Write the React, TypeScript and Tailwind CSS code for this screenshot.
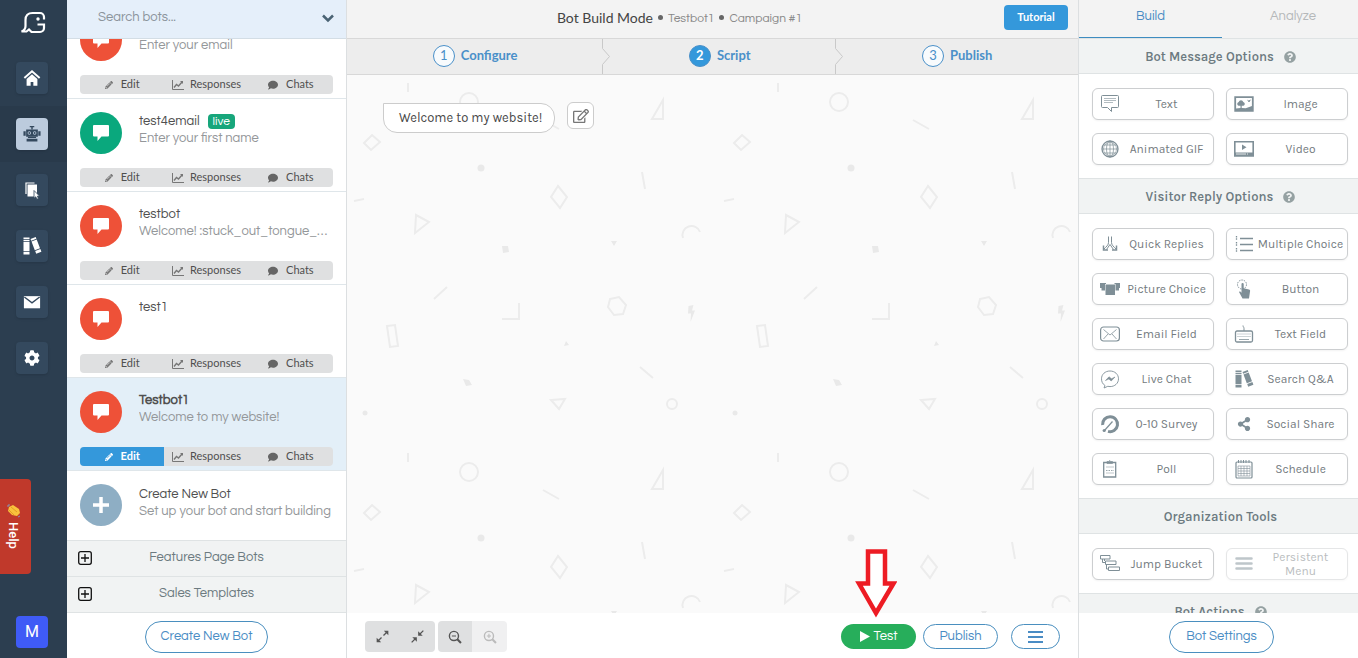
import React, { useLayoutEffect, useRef, useState } from "react";
import { FaComment, FaCog, FaPencilAlt, FaQuestionCircle, FaRegEdit, FaShareAlt } from "react-icons/fa";
import { clsx } from "clsx";

interface Bot {
  name: string;
  message: string;
  live?: boolean;
}

interface Tool {
  label: string;
  icon: React.ReactNode;
  disabled?: boolean;
}

const bots: Bot[] = [
  { name: "test-email", message: "Enter your email" },
  { name: "test4email", message: "Enter your first name", live: true },
  { name: "testbot", message: "Welcome! :stuck_out_tongue_winking_eye:" },
  { name: "test1", message: "" },
  { name: "Testbot1", message: "Welcome to my website!" },
];

const round = "font-[Questrial,'Open_Sans',sans-serif]";
const karla = "font-[Karla,Inter,sans-serif]";

const Svg = ({
  size = 20,
  className,
  children,
}: {
  size?: number;
  className?: string;
  children: React.ReactNode;
}) => (
  <svg
    width={size}
    height={size}
    viewBox="0 0 20 20"
    fill="none"
    stroke="currentColor"
    className={className}
    aria-hidden="true"
  >
    {children}
  </svg>
);

const BooksIcon = () => (
  <Svg>
    <g fill="currentColor" stroke="none">
      <path d="M1.500 1.500h6v1.800h-6zM1.500 4h6v1.200h-6zM1.500 6h6v9h-6zM1.500 15.800h6v2.700h-6z" />
      <path d="M8.500 3l5.200-2 .7 1.800-5.200 2zM9.500 5.600l5.200-2 3.300 8.700-5.200 2zM13.200 15l5.200-2 1 2.700-5.200 2z" />
    </g>
  </Svg>
);

const SpeechIcon = () => (
  <svg width="18" height="18" viewBox="0 0 18 18" fill="currentColor" aria-hidden="true">
    <path d="M2 1h14a1 1 0 0 1 1 1v9.500a1 1 0 0 1-1 1H9.500L5.500 17v-4.500H2a1 1 0 0 1-1-1V2a1 1 0 0 1 1-1z" />
  </svg>
);

const ChartIcon = () => (
  <svg width="12" height="10" viewBox="0 0 12 10" fill="none" stroke="currentColor" aria-hidden="true">
    <path d="M.5 0v9.500H12" />
    <path d="M2 7.500l2.500-3 2 1.500 4-4.500" strokeWidth="1.400" />
    <path d="M8 1h3v3z" fill="currentColor" stroke="none" />
  </svg>
);

const railItems = [
  {
    label: "Home",
    icon: (
      <Svg size={18}>
        <path d="M1.500 10L10 2.500l8.500 7.500" strokeWidth="2.200" />
        <path d="M4 11l6-5.300 6 5.300v7.500h-4.500v-4h-3v4H4z" fill="currentColor" stroke="none" />
      </Svg>
    ),
  },
  {
    label: "Bots",
    icon: (
      <Svg size={18}>
        <g fill="currentColor" stroke="none">
          <path d="M7.500 1h5v1.600h-1.700V5H9.200V2.600H7.500z" />
          <path
            fillRule="evenodd"
            d="M3.500 5h13v8h-13zM7 7a1.900 1.900 0 1 0 0 3.800A1.900 1.900 0 0 0 7 7zm6 0a1.900 1.900 0 1 0 0 3.800A1.900 1.900 0 0 0 13 7z"
          />
          <path d="M.5 7h2.500v5H.5zM17 7h2.500v5H17zM5.500 13h9v1.500h-9zM4 15.200h12v3H4z" />
          <circle cx="7" cy="8.900" r="1" />
          <circle cx="13" cy="8.900" r="1" />
        </g>
      </Svg>
    ),
  },
  {
    label: "Pages",
    icon: (
      <Svg>
        <path d="M4 14V3h8.500" strokeWidth="1.200" />
        <path d="M5.500 4.500H15v12H5.500z" fill="currentColor" stroke="none" />
        <path
          d="M12 10.500l5.500 5.500-2.200.2 1.200 2.300-1.600.7-1.100-2.400-1.800 1.400z"
          fill="currentColor"
          stroke="#34495e"
          strokeWidth=".8"
        />
      </Svg>
    ),
  },
  { label: "Knowledge base", icon: <BooksIcon /> },
  {
    label: "Messages",
    icon: (
      <Svg size={18}>
        <path d="M1 3.500h18v13.500H1z" fill="currentColor" stroke="none" />
        <path d="M1.500 4.500L10 11l8.500-6.500" stroke="#34495e" strokeWidth="1.500" />
      </Svg>
    ),
  },
  { label: "Settings", icon: <FaCog className="size-4" /> },
];

const messageTools: Tool[] = [
  {
    label: "Text",
    icon: (
      <Svg>
        <path d="M2.500 1.500h15a1 1 0 0 1 1 1v10a1 1 0 0 1-1 1h-6v4l-4-4h-5a1 1 0 0 1-1-1v-10a1 1 0 0 1 1-1z" />
        <path d="M4 4.500h12M4 6.500h12M4 8.500h9" strokeOpacity=".6" />
      </Svg>
    ),
  },
  {
    label: "Image",
    icon: (
      <Svg>
        <path d="M1.200 3.200h17.600v13.600H1.200z" strokeWidth="1.800" />
        <path
          d="M2 14.500l4.500-.5v-2.200H4.500A2 2 0 0 1 4.700 8a2.400 2.400 0 0 1 4.600 0 2 2 0 0 1 .2 3.800H7.700V14l4 .3L18 12v4.500H2z"
          fill="currentColor"
          stroke="none"
        />
        <path d="M13 5.500l1.500 1L17 5.500 15.500 8h-1z" fill="currentColor" stroke="none" />
      </Svg>
    ),
  },
  {
    label: "Animated GIF",
    icon: (
      <Svg>
        <circle cx="10" cy="10" r="8" strokeWidth="1.300" />
        <circle cx="10" cy="10" r="6.500" strokeWidth=".6" />
        <ellipse cx="10" cy="10" rx="3.500" ry="8" strokeWidth=".7" />
        <path d="M10 2v16M2 10h16M3.500 6h13M3.500 14h13" strokeWidth=".7" />
      </Svg>
    ),
  },
  {
    label: "Video",
    icon: (
      <Svg>
        <path d="M.8 2.800h18.400v14H.8z" strokeWidth="1.600" />
        <path d="M0 13.500h20v4H0z" fill="currentColor" stroke="none" />
        <path d="M8 5.500l4.500 2.800L8 11z" fill="currentColor" stroke="none" />
        <path d="M2 15h10M13 15h1" stroke="white" strokeWidth=".8" />
      </Svg>
    ),
  },
];

const replyTools: Tool[] = [
  {
    label: "Quick Replies",
    icon: (
      <Svg>
        <path d="M8.500 2.500v6c0 2.500-2 4-5 7M11.500 2.500v6c0 2.500 2 4 5 7M10 10.500l-3.500 5M10 10.500l3.500 5" />
        <path d="M3.500 11.500V16H8M16.500 11.500V16H12" strokeWidth="1.500" />
      </Svg>
    ),
  },
  {
    label: "Multiple Choice",
    icon: (
      <Svg>
        <path d="M6 4.500h13M6 10.500h13M6 16.500h13" strokeWidth="1.500" />
        <path d="M2.500 2v4M2.500 8v4M2.500 14v4" strokeWidth="1.300" strokeDasharray="1.500 .8" />
      </Svg>
    ),
  },
  {
    label: "Picture Choice",
    icon: (
      <Svg>
        <path d="M5.500 5.500h9.500v10.500H5.500zM0 4h6v1H5v6.500H1.500V9H0zM14.500 4H20v5h-1v2.500h-3.500V5h-1z" fill="currentColor" stroke="none" />
      </Svg>
    ),
  },
  {
    label: "Button",
    icon: (
      <Svg>
        <circle cx="8" cy="5.500" r="4.500" strokeDasharray="1.500 1" />
        <path
          d="M7.500 5a1 1 0 0 1 2.200 0v4.300l5.300 1.200c.8.200 1.200.7 1.100 1.500L15 19.500H8.500L5 13l1-.8 1.500 1.500z"
          fill="currentColor"
          stroke="none"
        />
      </Svg>
    ),
  },
  {
    label: "Email Field",
    icon: (
      <Svg>
        <rect x=".6" y="3" width="18.800" height="14" rx="3" strokeWidth="1.200" />
        <path d="M3.500 5.500L10 11l6.500-5.500M3.500 15l4.500-5M16.500 15l-4.500-5" strokeWidth=".8" />
      </Svg>
    ),
  },
  {
    label: "Text Field",
    icon: (
      <Svg>
        <path d="M10 7V4.500C10 3 9 3 9 1.500" />
        <rect x="1.500" y="7" width="17" height="11" rx="1.500" strokeWidth="1.300" />
        <path d="M3.500 10h13M3.500 12.500h13" strokeWidth=".8" strokeDasharray="1 1" />
        <path d="M5 15.500h10" strokeWidth=".8" />
      </Svg>
    ),
  },
  {
    label: "Live Chat",
    icon: (
      <Svg>
        <path
          d="M5 16.500C2.500 15 1.500 12.500 1.500 9.800 1.500 5.300 5.200 2 10 2s8.500 3.300 8.500 7.800-3.700 7.800-8.500 7.800c-.8 0-1.500-.1-2.200-.3L4 19z"
          strokeWidth=".9"
        />
        <path d="M5.500 11.500L9 7.800l2.500 2L15 8l-3.800 4-2.300-2z" fill="currentColor" strokeWidth=".6" />
      </Svg>
    ),
  },
  { label: "Search Q&A", icon: <BooksIcon /> },
  {
    label: "0-10 Survey",
    icon: (
      <Svg>
        <path d="M2.600 11A7.500 7.500 0 1 1 8 17.400" strokeWidth="3" />
        <path d="M4 17l8.500-9.500" strokeWidth="1.200" />
        <circle cx="4.200" cy="16.500" r="1.600" fill="currentColor" stroke="none" />
      </Svg>
    ),
  },
  { label: "Social Share", icon: <FaShareAlt className="mx-[3px] size-3.5" /> },
  {
    label: "Poll",
    icon: (
      <Svg>
        <path d="M3.700 3.500h12v14.500h-12z" strokeWidth="1.300" />
        <path d="M7 2.500h5.500v2H7zM9.700 1v1" strokeWidth=".8" />
        <path d="M6 8h8M6 14h8" strokeWidth=".5" />
        <path d="M6 11.500h8" strokeWidth=".8" strokeDasharray="1.500 1" />
      </Svg>
    ),
  },
  {
    label: "Schedule",
    icon: (
      <Svg>
        <rect x="2" y="3" width="16" height="16" rx="1" strokeWidth="1.200" />
        <path d="M4.500 1v3M7 1v3M9.500 1v3M12 1v3M15 1v3" />
        <path d="M4 7h12v10H4zM4 9.500h12M4 12h12M4 14.500h12M7 7v10M10 7v10M13 7v10" strokeWidth=".6" />
      </Svg>
    ),
  },
];

const orgTools: Tool[] = [
  {
    label: "Jump Bucket",
    icon: (
      <Svg>
        <path d="M.5 1.500h9.500V5H.5zM5.500 7H16v3.500H5.500zM8.500 13h11v3.500h-11zM2.500 5v3.500h3M4.500 5v2M6.500 10.500V15h2" />
      </Svg>
    ),
  },
  {
    label: "Persistent Menu",
    disabled: true,
    icon: (
      <Svg>
        <path d="M2.500 4.500h15M2.500 9.500h15M2.500 14.500h15" strokeWidth="2.500" strokeLinecap="round" />
      </Svg>
    ),
  },
];

const BotRow = ({ bot, active }: { bot: Bot; active: boolean }) => (
  <li className={clsx("h-[93px] border-b border-[#dfe6ea] px-[13px] pt-[13px]", active ? "bg-[#e3eff8]" : "bg-white")}>
    <div className="flex h-14 gap-4">
      <span
        className={clsx(
          "flex size-[42px] shrink-0 items-center justify-center rounded-full text-white",
          bot.live ? "bg-[#0aa87d]" : "bg-[#ee5138]",
        )}
      >
        <SpeechIcon />
      </span>
      <div className={clsx("min-w-0 flex-1 pt-px pl-px text-[13px] leading-[17px]", round)}>
        <p className={clsx("flex items-center gap-2 text-[#505050]", active && "font-bold")}>
          {bot.name}
          {bot.live && (
            <span className="rounded bg-[#17a67b] px-[5px] text-xs leading-[15px] text-white">live</span>
          )}
        </p>
        <p className="truncate text-[#94979a]">{bot.message}</p>
      </div>
    </div>
    <div className="grid h-[19px] grid-cols-3 overflow-hidden rounded bg-[#dfe0e1] text-[11px] text-[#4f4f4f]">
      <button
        className={clsx("flex items-center justify-center gap-2", active && "bg-[#3498db] font-bold text-white")}
      >
        <FaPencilAlt className={clsx("size-2", active ? "text-white" : "text-[#777]")} />
        Edit
      </button>
      <button className="flex items-center justify-center gap-1.5">
        <span className="text-[#777]">
          <ChartIcon />
        </span>
        Responses
      </button>
      <button className="flex items-center justify-center gap-2">
        <FaComment className="size-2.5 text-[#666]" />
        Chats
      </button>
    </div>
  </li>
);

const ToolSection = ({ title, tools, help }: { title: string; tools: Tool[]; help?: boolean }) => (
  <section>
    <h2
      className={clsx(
        "flex h-9 items-center justify-center gap-2.5 border-y border-[#dfe3e4] bg-[#f1f3f3] pt-0.5 pl-1 text-[13px] font-semibold text-[#6c7a80]",
        karla,
      )}
    >
      {title}
      {help && <FaQuestionCircle className="size-3 text-[#95a1a2]" />}
    </h2>
    {tools.length > 0 && (
      <div className="grid grid-cols-2 gap-x-3 gap-y-[13px] pt-3.5 pr-2.5 pb-[13px] pl-[13px]">
        {tools.map((tool) => (
          <button
            key={tool.label}
            disabled={tool.disabled}
            className={clsx(
              "flex h-8 items-center rounded-md border border-[#ccced0] bg-white pb-px pl-[7px] text-xs leading-3.5 text-[#747b80] shadow-xs",
              karla,
              tool.disabled && "opacity-50",
            )}
          >
            <span className="text-[#7f8f97]">{tool.icon}</span>
            <span className={clsx("flex-1", tool.disabled && "px-4")}>{tool.label}</span>
          </button>
        ))}
      </div>
    )}
  </section>
);

const Step = ({ number, label, current, last }: { number: number; label: string; current?: boolean; last?: boolean }) => (
  <li className="relative flex flex-auto items-center justify-center">
    <a href="#" className="flex items-center gap-1.5 text-[13px] font-bold text-[#4a90c9]">
      <span
        className={clsx(
          "flex size-[22px] items-center justify-center rounded-full border border-[#4a90c9]",
          current ? "bg-[#3498db] text-white" : "bg-[#f8fbfd] font-normal",
        )}
      >
        {number}
      </span>
      {label}
    </a>
    {!last && (
      <svg
        width="10"
        height="35"
        viewBox="0 0 10 35"
        fill="none"
        stroke="#c9c9c9"
        className="absolute top-0 -right-2"
        aria-hidden="true"
      >
        <path d="M1.500 0v9.500l7 8-7 8V35" />
      </svg>
    )}
  </li>
);

const Pattern = () => (
  <svg className="absolute inset-0 size-full" aria-hidden="true">
    <defs>
      <pattern id="shapes" x="317" y="0" width="370" height="370" patternUnits="userSpaceOnUse">
        <g fill="none" stroke="#ececec" strokeWidth="2">
          <path d="M114 8v9M249 45l16 9M348 97l3 17M60 126l10-2M140 224l13-12M346 292l13 11" />
          <circle cx="175" cy="27" r="9" />
          <path d="M369 25v19h-11z" />
          <path d="M78 60l8 7-9 8-7-7zM264 111l9 11-7 11-9-11zM122 140l13 7-14 11z" />
          <path d="M19 163a9 9 0 0 1 17-6M225 228v16h-17" />
          <path d="M316 224l9-2 7 8-3 9-9 1-6-8zM93 251l8-1 3 21-8 1zM257 325l14-1-6 10z" />
          <circle cx="8" cy="329" r="5" />
        </g>
        <g fill="#e9e9e9">
          <circle cx="187" cy="93" r="3.500" />
          <path d="M208 171l6 0 1 6-6 1zM317 166h6l-3 5zM272 266l3 4-5 1zM169 304l6 1 3 5-6 1z" />
          <path d="M24.500 231l5-1-1.500 5.500h3L26.500 247l.5-8.500h-3z" />
          <circle cx="71" cy="338" r="2.500" />
        </g>
      </pattern>
    </defs>
    <rect width="100%" height="100%" fill="url(#shapes)" />
  </svg>
);

const Magnifier = ({ plus }: { plus?: boolean }) => (
  <Svg size={14}>
    <circle cx="8.500" cy="8.500" r="6.500" strokeWidth="2" />
    <path d="M13 13l5.500 5.500" strokeWidth="3" />
    <path d={plus ? "M5.500 8.500h6M8.500 5.500v6" : "M5.500 8.500h6"} strokeWidth="1.500" />
  </Svg>
);

const pill = "rounded-full border border-[#4a8fbf] bg-white text-[#4a8cc4]";

const App = () => {
  const listRef = useRef<HTMLDivElement>(null);
  const [tab, setTab] = useState("Build");

  // Keep the selected bot in view
  useLayoutEffect(() => {
    if (listRef.current) listRef.current.scrollTop = listRef.current.scrollHeight;
  }, []);

  return (
    <div className="flex h-screen overflow-hidden bg-white font-[Lato,sans-serif]">
      <nav className="relative flex w-[67px] shrink-0 flex-col bg-[#2c3e50] pr-[3px] text-white">
        <a href="#" aria-label="Home page" className="flex h-[50px] items-center justify-center pb-1 pl-0.5">
          <svg width="26" height="24" viewBox="0 0 26 24" fill="none" stroke="white" strokeWidth="2.200" aria-hidden="true">
            <path d="M24 8.500V6a4 4 0 0 0-4-4h-7.500C8 2 5.500 4.500 5.500 9v6c0 3-1 4.500-4 5.500h5l2.500-2 2.500 2.500H20a4 4 0 0 0 4-4v-3.500h-6.500" />
            <circle cx="18" cy="8" r="1.700" fill="white" stroke="none" />
          </svg>
        </a>
        {railItems.map((item) => (
          <div
            key={item.label}
            className={clsx(
              "-mr-[3px] flex h-14 items-center justify-center pr-[3px]",
              item.label === "Bots" && "bg-[#293a4b]",
            )}
          >
            <button
              aria-label={item.label}
              className={clsx(
                "flex size-8 items-center justify-center rounded shadow",
                item.label === "Bots" ? "bg-[#bccbdd] text-[#34495e]" : "bg-[#34495e]",
              )}
            >
              {item.icon}
            </button>
          </div>
        ))}
        <button className="mx-auto mt-auto mb-2.5 size-8 rounded bg-[#3f5bf6] font-[Roboto,sans-serif] text-base">
          M
        </button>
        <button className="absolute bottom-[84px] left-0 flex h-[95px] w-[31px] items-center justify-center gap-1 rounded-r bg-[#c0392b] pr-1 font-[Roboto,sans-serif] text-[13px] font-medium [writing-mode:vertical-rl]">
          <svg width="14" height="14" viewBox="0 0 14 14" aria-hidden="true">
            <path d="M2 3l4-2 6 4 1 4-3 3-5-1-4-4z" fill="#f9c23c" />
            <path d="M4 3l6 5M2 6l5 5" stroke="#e39a26" />
            <path d="M1 3V1h2M11 13l2-1" stroke="#8795b8" fill="none" />
          </svg>
          Help
        </button>
      </nav>

      <aside className="flex w-[280px] shrink-0 flex-col border-r border-[#dcdfe1]">
        <div className="flex h-[39px] shrink-0 items-center border-b border-[#d3dde5] bg-[#e5effa] pr-3 pb-0.5">
          <input
            aria-label="Search bots"
            placeholder="Search bots..."
            className={clsx("min-w-0 flex-1 bg-transparent pl-[31px] text-[13px] outline-none placeholder:text-[#8b949c]", round)}
          />
          <button aria-label="Filter bots">
            <svg width="12" height="9" viewBox="0 0 12 9" fill="none" stroke="#4a6374" strokeWidth="2.500" aria-hidden="true">
              <path d="M1 1.500l5 5 5-5" />
            </svg>
          </button>
        </div>
        <div ref={listRef} className="min-h-0 flex-1 overflow-y-auto [scrollbar-width:none]">
          <ul>
            {bots.map((bot) => (
              <BotRow key={bot.name} bot={bot} active={bot.name === "Testbot1"} />
            ))}
          </ul>
          <button className={clsx("flex h-[69px] w-full gap-4 px-[13px] pt-[13px] text-left text-[13px] leading-[17px]", round)}>
            <span className="flex size-[42px] shrink-0 items-center justify-center rounded-full bg-[#8eaec4] text-white">
              <svg width="18" height="18" viewBox="0 0 18 18" stroke="currentColor" strokeWidth="3.500" aria-hidden="true">
                <path d="M9 1v16M1 9h16" />
              </svg>
            </span>
            <span className="pt-0.5 pl-px text-[#505050]">
              Create New Bot
              <span className="block text-[#94979a]">Set up your bot and start building</span>
            </span>
          </button>
          {["Features Page Bots", "Sales Templates"].map((group) => (
            <button
              key={group}
              className={clsx("flex h-9 w-full items-center border-t border-[#dfe3e4] bg-[#f1f3f3] px-[11px] pb-px text-[13px] text-[#6c7a80]", round)}
            >
              <svg width="14" height="14" viewBox="0 0 14 14" fill="none" stroke="#111" strokeWidth="1.300" aria-hidden="true">
                <rect x=".7" y=".7" width="12.600" height="12.600" rx="2" />
                <path d="M7 3v8M3 7h8" />
              </svg>
              <span className="flex-1 pr-3.5">{group}</span>
            </button>
          ))}
        </div>
        <div className="flex h-[46px] shrink-0 items-center justify-center border-t border-[#dfe3e4]">
          <button className={clsx("mt-0.5 h-8 px-[15px] text-[13px]", pill, round)}>Create New Bot</button>
        </div>
      </aside>

      <main className="flex min-w-0 flex-1 flex-col">
        <header className="flex h-[39px] shrink-0 items-center border-b border-[#d8d8d8] bg-[#f3f3f3] pr-2.5 pb-[3px]">
          <h1 className="flex flex-1 items-center justify-center gap-[5px] pl-2 text-sm text-[#444]">
            Bot Build Mode
            <span className="size-[5px] rounded-full bg-[#666]" />
            <span className={clsx("pt-0.5 text-xs text-[#888]", round)}>Testbot1</span>
            <span className="size-[5px] rounded-full bg-[#666]" />
            <span className={clsx("pt-0.5 text-xs text-[#888]", round)}>Campaign #1</span>
          </h1>
          <button className="h-[25px] w-16 rounded bg-[#3498db] text-[11px] font-bold text-white">Tutorial</button>
        </header>
        <ol className="flex h-9 shrink-0 border-b border-[#d8d8d8] bg-[#ededed] pb-px">
          <Step number={1} label="Configure" />
          <Step number={2} label="Script" current />
          <Step number={3} label="Publish" last />
        </ol>
        <div className="relative min-h-0 flex-1 bg-[#fafafa]">
          <Pattern />
          <div className="relative flex items-center gap-3 px-9 pt-[27px]">
            <p
              className={clsx(
                "rounded-[14px] rounded-tl-none border border-[#ccc] bg-white py-1 pr-3 pl-[15px] text-[13px] leading-5 text-[#484848]",
                karla,
              )}
            >
              Welcome to my website!
            </p>
            <button
              aria-label="Edit message"
              className="mb-1 flex size-[27px] items-center justify-center rounded-md border border-[#ccc] bg-white text-[#777]"
            >
              <FaRegEdit className="size-4" />
            </button>
          </div>
        </div>
        <footer className="flex h-[45px] shrink-0 items-center bg-white px-[18px] pt-0.5 text-[#555]">
          <div className="mr-[3px] flex h-[31px] overflow-hidden rounded bg-[#dfe0e1]">
            <button aria-label="Expand" className="flex w-[35px] items-center justify-center">
              <Svg size={13}>
                <path d="M11.500 8.500L17 3M8.500 11.500L3 17" strokeWidth="2" />
                <path d="M12 1h7v7zM1 12v7h7z" fill="currentColor" stroke="none" />
              </Svg>
            </button>
            <button aria-label="Collapse" className="flex w-[35px] items-center justify-center">
              <Svg size={13}>
                <path d="M13 7l6-6M7 13l-6 6" strokeWidth="2" />
                <path d="M11 2v7h7zM2 11h7v7z" fill="currentColor" stroke="none" />
              </Svg>
            </button>
          </div>
          <div className="flex h-[31px] overflow-hidden rounded">
            <button aria-label="Zoom out" className="flex w-[34px] items-center justify-center bg-[#dfe0e1]">
              <Magnifier />
            </button>
            <button aria-label="Zoom in" disabled className="flex w-[35px] items-center justify-center bg-[#f0f0f1] text-[#bbb]">
              <Magnifier plus />
            </button>
          </div>
          <div className={clsx("ml-auto flex items-center text-[13px]", round)}>
            <div className="relative mr-[7px]">
              <button className="flex h-[25px] w-[75px] items-center justify-center gap-1 rounded-full bg-[#27ae5b] text-white">
                <svg width="10" height="11" viewBox="0 0 10 11" fill="white" aria-hidden="true">
                  <path d="M0 0l10 5.500L0 11z" />
                </svg>
                Test
              </button>
              <svg
                width="42"
                height="72"
                viewBox="0 0 42 72"
                className="pointer-events-none absolute bottom-[30px] left-3.5"
                aria-hidden="true"
              >
                <path d="M13 4.500h17v32h8.500L21 66 4 36.500h9z" fill="white" stroke="#ed1c24" strokeWidth="4.500" />
              </svg>
            </div>
            <button className={clsx("mr-[13px] h-[25px] w-[75px]", pill)}>Publish</button>
            <button aria-label="Menu" className={clsx("flex h-[25px] w-[49px] items-center justify-center", pill)}>
              <svg width="15" height="12" viewBox="0 0 15 12" stroke="currentColor" strokeWidth="2" aria-hidden="true">
                <path d="M0 1h15M0 6h15M0 11h15" />
              </svg>
            </button>
          </div>
        </footer>
      </main>

      <aside className="flex w-[280px] shrink-0 flex-col border-l border-[#dcdfe1]">
        <div className={clsx("grid h-[38px] shrink-0 grid-cols-[143px_1fr] bg-[#f3f3f3] text-[13px]", round)}>
          {["Build", "Analyze"].map((name) => (
            <button
              key={name}
              onClick={() => setTab(name)}
              className={clsx(
                "border-b pb-1",
                tab === name ? "border-[#3d8cc0] text-[#4a8cc4]" : "border-transparent pl-1.5 text-[#b5b8ba]",
              )}
            >
              {name}
            </button>
          ))}
        </div>
        <div className="min-h-0 flex-1 overflow-y-auto [scrollbar-width:none]">
          <ToolSection title="Bot Message Options" tools={messageTools} help />
          <ToolSection title="Visitor Reply Options" tools={replyTools} help />
          <ToolSection title="Organization Tools" tools={orgTools} />
          <ToolSection title="Bot Actions" tools={[]} help />
        </div>
        <div className="flex h-[45px] shrink-0 items-center justify-center pl-1.5">
          <button className={clsx("mt-0.5 h-8 px-4 text-[13px]", pill, round)}>Bot Settings</button>
        </div>
      </aside>
    </div>
  );
};

export default App;
